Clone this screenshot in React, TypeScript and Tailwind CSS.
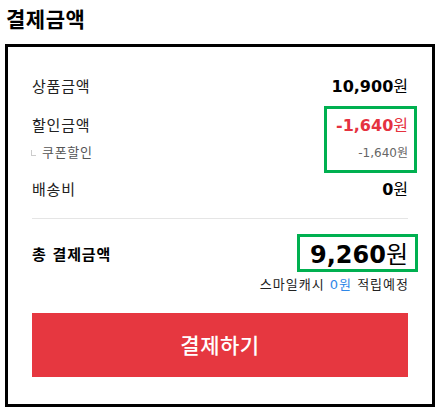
export default function App() {
    return (
        <div className="w-[445px] h-[414px] bg-white text-black" style={{ fontFamily: '"DejaVu Sans", "Noto Sans CJK KR", sans-serif' }}>
            <div className="px-[6px] pt-[4px]">
                <h2 className="text-[21px] font-bold leading-[28px] tracking-[0.5px]" style={{ fontFamily: '"Noto Sans CJK KR", sans-serif' }}>결제금액</h2>
            </div>
            <div className="ml-[5px] mt-[12px] w-[430px] h-[363px] border-[3px] border-black px-[24px] pt-[29px]">
                <div className="flex items-center justify-between h-[22px]">
                    <span className="text-[15px] tracking-[0.8px] text-[#222]">상품금액</span>
                    <span className="text-[16px]">
                        <strong className="font-bold">10,900</strong>원
                    </span>
                </div>
                <div className="relative mt-[17px]">
                    <div className="flex items-center justify-between h-[22px]">
                        <span className="text-[15px] tracking-[0.8px] text-[#222]">할인금액</span>
                        <span className="text-[16px] text-[#e5323f]">
                            <strong className="font-bold">-1,640</strong>원
                        </span>
                    </div>
                    <div className="flex items-center justify-between h-[18px] mt-[7px]">
                        <span className="flex items-center text-[13px] tracking-[0.7px] text-[#555]">
                            <span className="w-[5px] h-[6px] border-l border-b border-[#ccc] mr-[6px] ml-[-1px]" />
                            쿠폰할인
                        </span>
                        <span className="text-[12px] text-[#666]">-1,640원</span>
                    </div>
                    <div className="absolute right-[-9px] top-[-9px] w-[93px] h-[67px] border-[3px] border-[#00b050]" />
                </div>
                <div className="flex items-center justify-between h-[22px] mt-[17px]">
                    <span className="text-[15px] tracking-[0.8px] text-[#222]">배송비</span>
                    <span className="text-[16px]">
                        <strong className="font-bold">0</strong>원
                    </span>
                </div>
                <div className="border-t border-[#e5e5e5] mt-[17px]" />
                <div className="relative flex items-center justify-between h-[30px] mt-[21px]">
                    <span className="text-[15px] tracking-[0.8px] font-bold">총 결제금액</span>
                    <span className="text-[24px] leading-[30px]">
                        <strong className="font-bold">9,260</strong>원
                    </span>
                    <div className="absolute right-[-10px] top-[-6px] w-[121px] h-[38px] border-[3px] border-[#00b050]" />
                </div>
                <div className="text-right text-[13px] tracking-[1px] text-[#222] mt-[6px] leading-[18px] mr-[-1px]">
                    스마일캐시 <span className="text-[#2f88e8]">0원</span> 적립예정
                </div>
                <button className="mt-[19px] w-full h-[64px] bg-[#e63740] text-white text-[21px] tracking-[0.5px] font-medium" style={{ fontFamily: '"Noto Sans CJK KR", sans-serif' }}>결제하기</button>
            </div>
        </div>
    );
}
